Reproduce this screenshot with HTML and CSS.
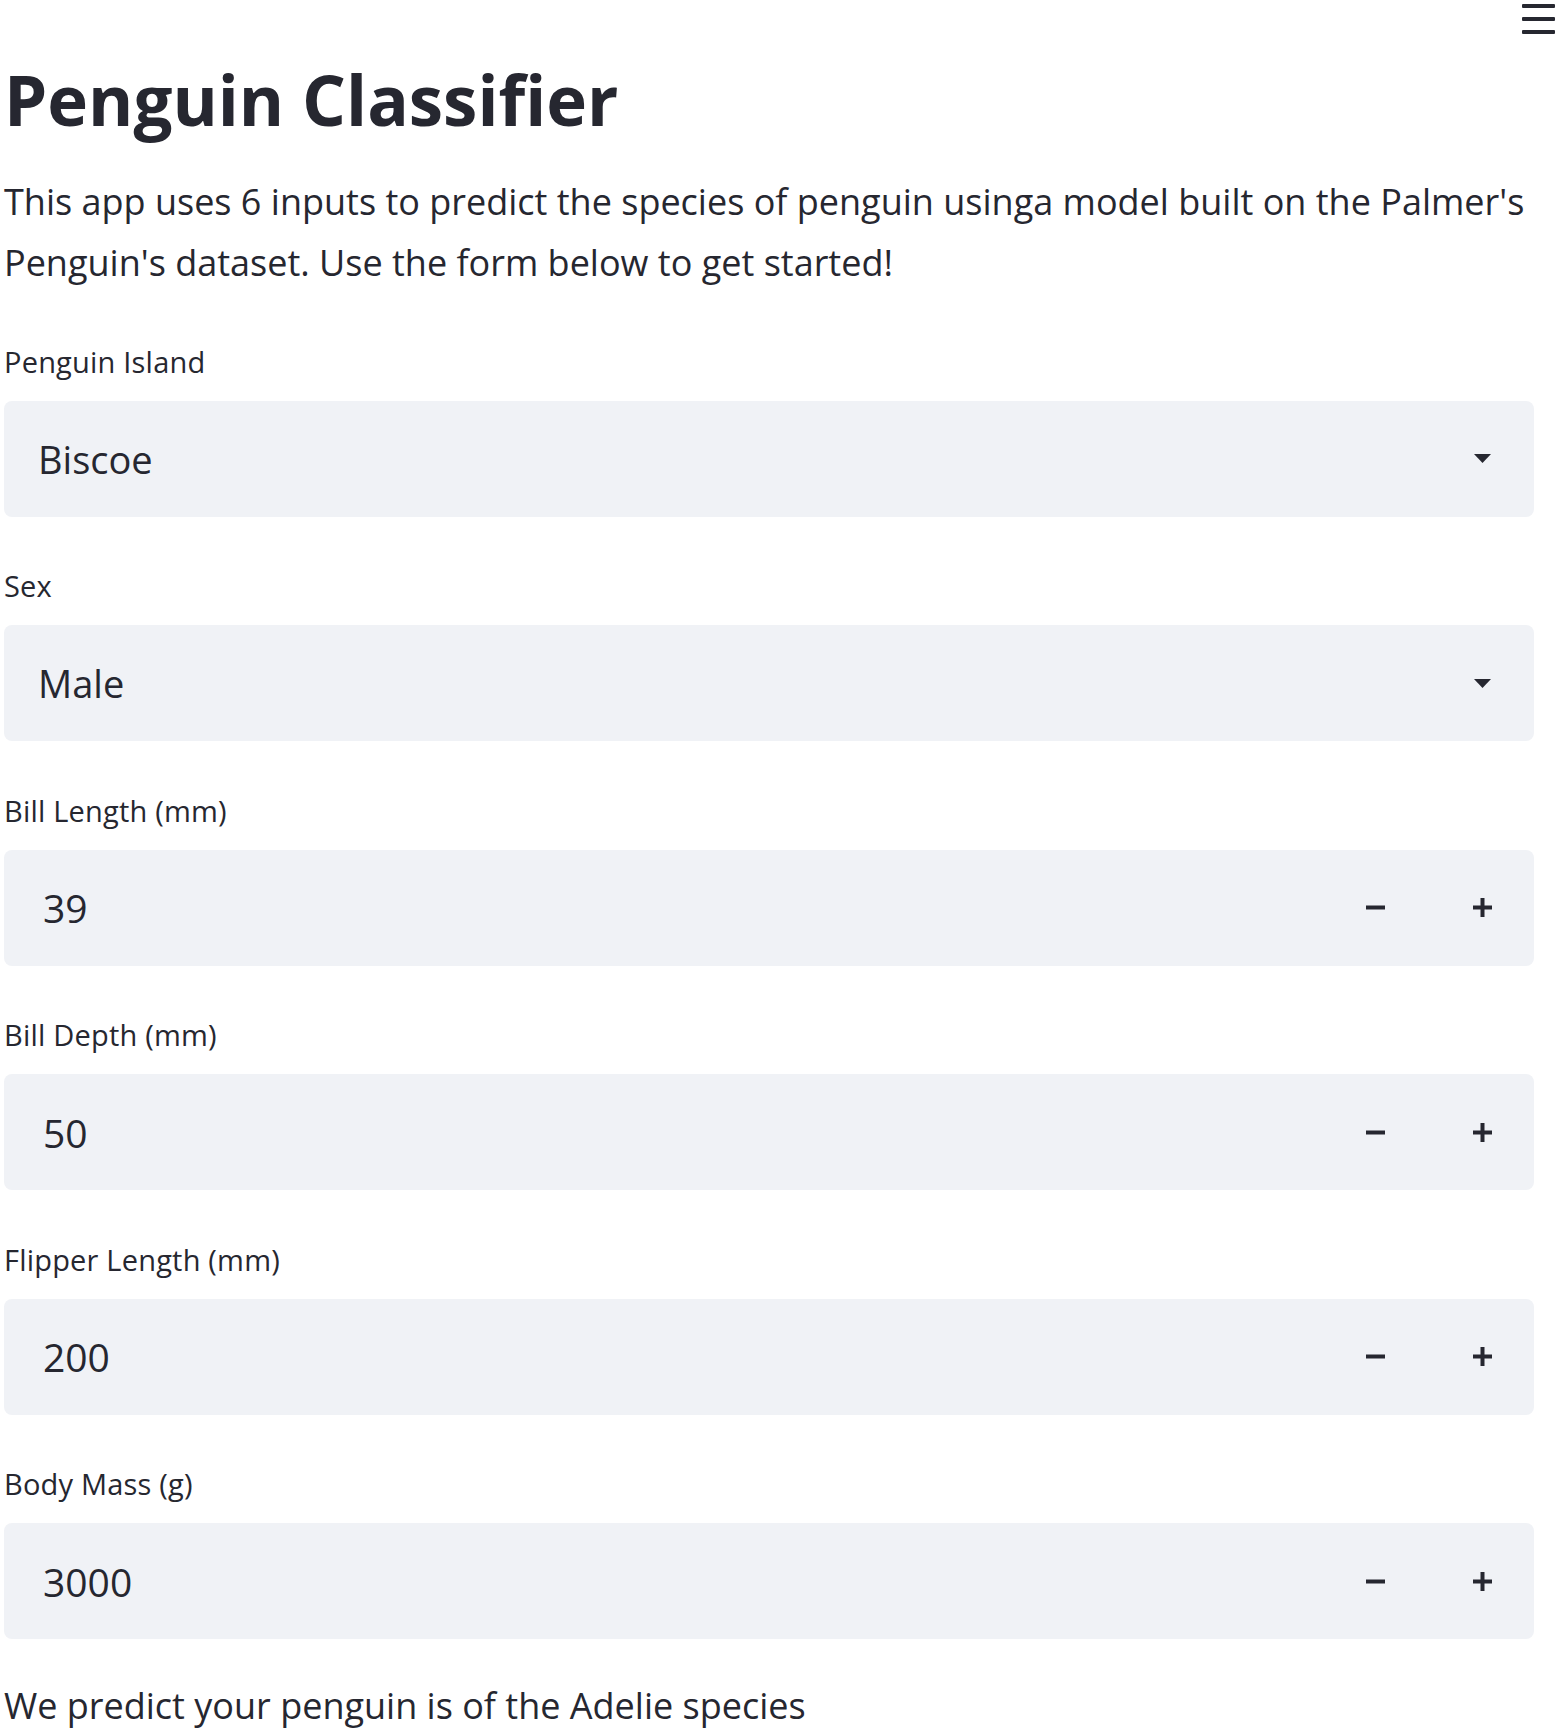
FILE: index.html
```html
<!DOCTYPE html>
<html lang="en">
<head>
<meta charset="utf-8">
<title>Penguin Classifier</title>
<link rel="stylesheet" href="styles.css">
</head>
<body>
<div class="menu-button" aria-label="Menu">
  <span class="menu-line"></span>
  <span class="menu-line"></span>
  <span class="menu-line"></span>
</div>
<main class="app">
  <h1 class="title">Penguin Classifier</h1>
  <p class="intro">This app uses 6 inputs to predict the species of penguin usinga model built on the Palmer's Penguin's dataset. Use the form below to get started!</p>

  <div class="field">
    <div class="label">Penguin Island</div>
    <div class="box select">
      <span class="value">Biscoe</span>
      <svg class="caret" width="17" height="9" viewBox="0 0 17 9"><polygon points="0,0 17,0 8.5,9" fill="#262730"/></svg>
    </div>
  </div>

  <div class="field">
    <div class="label">Sex</div>
    <div class="box select">
      <span class="value">Male</span>
      <svg class="caret" width="17" height="9" viewBox="0 0 17 9"><polygon points="0,0 17,0 8.5,9" fill="#262730"/></svg>
    </div>
  </div>

  <div class="field">
    <div class="label">Bill Length (mm)</div>
    <div class="box number">
      <span class="value">39</span>
      <div class="steppers">
        <svg class="step" width="19" height="19" viewBox="0 0 19 19"><rect x="0" y="7.5" width="19" height="4" fill="#262730"/></svg>
        <svg class="step" width="19" height="19" viewBox="0 0 19 19"><rect x="0" y="7.5" width="19" height="4" fill="#262730"/><rect x="7.5" y="0" width="4" height="19" fill="#262730"/></svg>
      </div>
    </div>
  </div>

  <div class="field">
    <div class="label">Bill Depth (mm)</div>
    <div class="box number">
      <span class="value">50</span>
      <div class="steppers">
        <svg class="step" width="19" height="19" viewBox="0 0 19 19"><rect x="0" y="7.5" width="19" height="4" fill="#262730"/></svg>
        <svg class="step" width="19" height="19" viewBox="0 0 19 19"><rect x="0" y="7.5" width="19" height="4" fill="#262730"/><rect x="7.5" y="0" width="4" height="19" fill="#262730"/></svg>
      </div>
    </div>
  </div>

  <div class="field">
    <div class="label">Flipper Length (mm)</div>
    <div class="box number">
      <span class="value">200</span>
      <div class="steppers">
        <svg class="step" width="19" height="19" viewBox="0 0 19 19"><rect x="0" y="7.5" width="19" height="4" fill="#262730"/></svg>
        <svg class="step" width="19" height="19" viewBox="0 0 19 19"><rect x="0" y="7.5" width="19" height="4" fill="#262730"/><rect x="7.5" y="0" width="4" height="19" fill="#262730"/></svg>
      </div>
    </div>
  </div>

  <div class="field">
    <div class="label">Body Mass (g)</div>
    <div class="box number">
      <span class="value">3000</span>
      <div class="steppers">
        <svg class="step" width="19" height="19" viewBox="0 0 19 19"><rect x="0" y="7.5" width="19" height="4" fill="#262730"/></svg>
        <svg class="step" width="19" height="19" viewBox="0 0 19 19"><rect x="0" y="7.5" width="19" height="4" fill="#262730"/><rect x="7.5" y="0" width="4" height="19" fill="#262730"/></svg>
      </div>
    </div>
  </div>

  <p class="result">We predict your penguin is of the Adelie species</p>
</main>
</body>
</html>
```

FILE: styles.css
```css
html, body {
  margin: 0;
  padding: 0;
  background: #ffffff;
}

body {
  font-family: "Open Sans", "Noto Sans", sans-serif;
  color: #262730;
}

.menu-button {
  position: absolute;
  top: 4px;
  right: 5px;
  width: 33px;
  display: flex;
  flex-direction: column;
  gap: 9.5px;
}

.menu-line {
  display: block;
  height: 3.5px;
  background: #262730;
  border-radius: 1px;
}

.app {
  width: 1530px;
  padding: 0 26px 0 4px;
  display: flex;
  flex-direction: column;
}

.title {
  margin: 58px 0 0 0;
  font-size: 69px;
  line-height: 82px;
  font-weight: 700;
  letter-spacing: 0;
}

.intro {
  margin: 30.6px 0 0 0;
  font-size: 36px;
  line-height: 61px;
}

.field {
  margin-top: 49px;
  display: flex;
  flex-direction: column;
}

.field + .field {
  margin-top: 49.5px;
}

.label {
  font-size: 29px;
  line-height: 40px;
  letter-spacing: 0.2px;
}

.box {
  margin-top: 19px;
  height: 116px;
  background: #f0f2f6;
  border-radius: 8px;
  display: flex;
  align-items: center;
  justify-content: space-between;
}

.value {
  font-size: 38px;
}

.number .value {
  font-size: 39px;
}

.select {
  padding: 0 43px 0 34px;
}

.number {
  padding: 0 42px 0 39px;
}

.steppers {
  display: flex;
  align-items: center;
  gap: 88px;
}

.step, .caret {
  display: block;
}

.result {
  margin: 37px 0 0 0;
  font-size: 36px;
  line-height: 59px;
}
```
